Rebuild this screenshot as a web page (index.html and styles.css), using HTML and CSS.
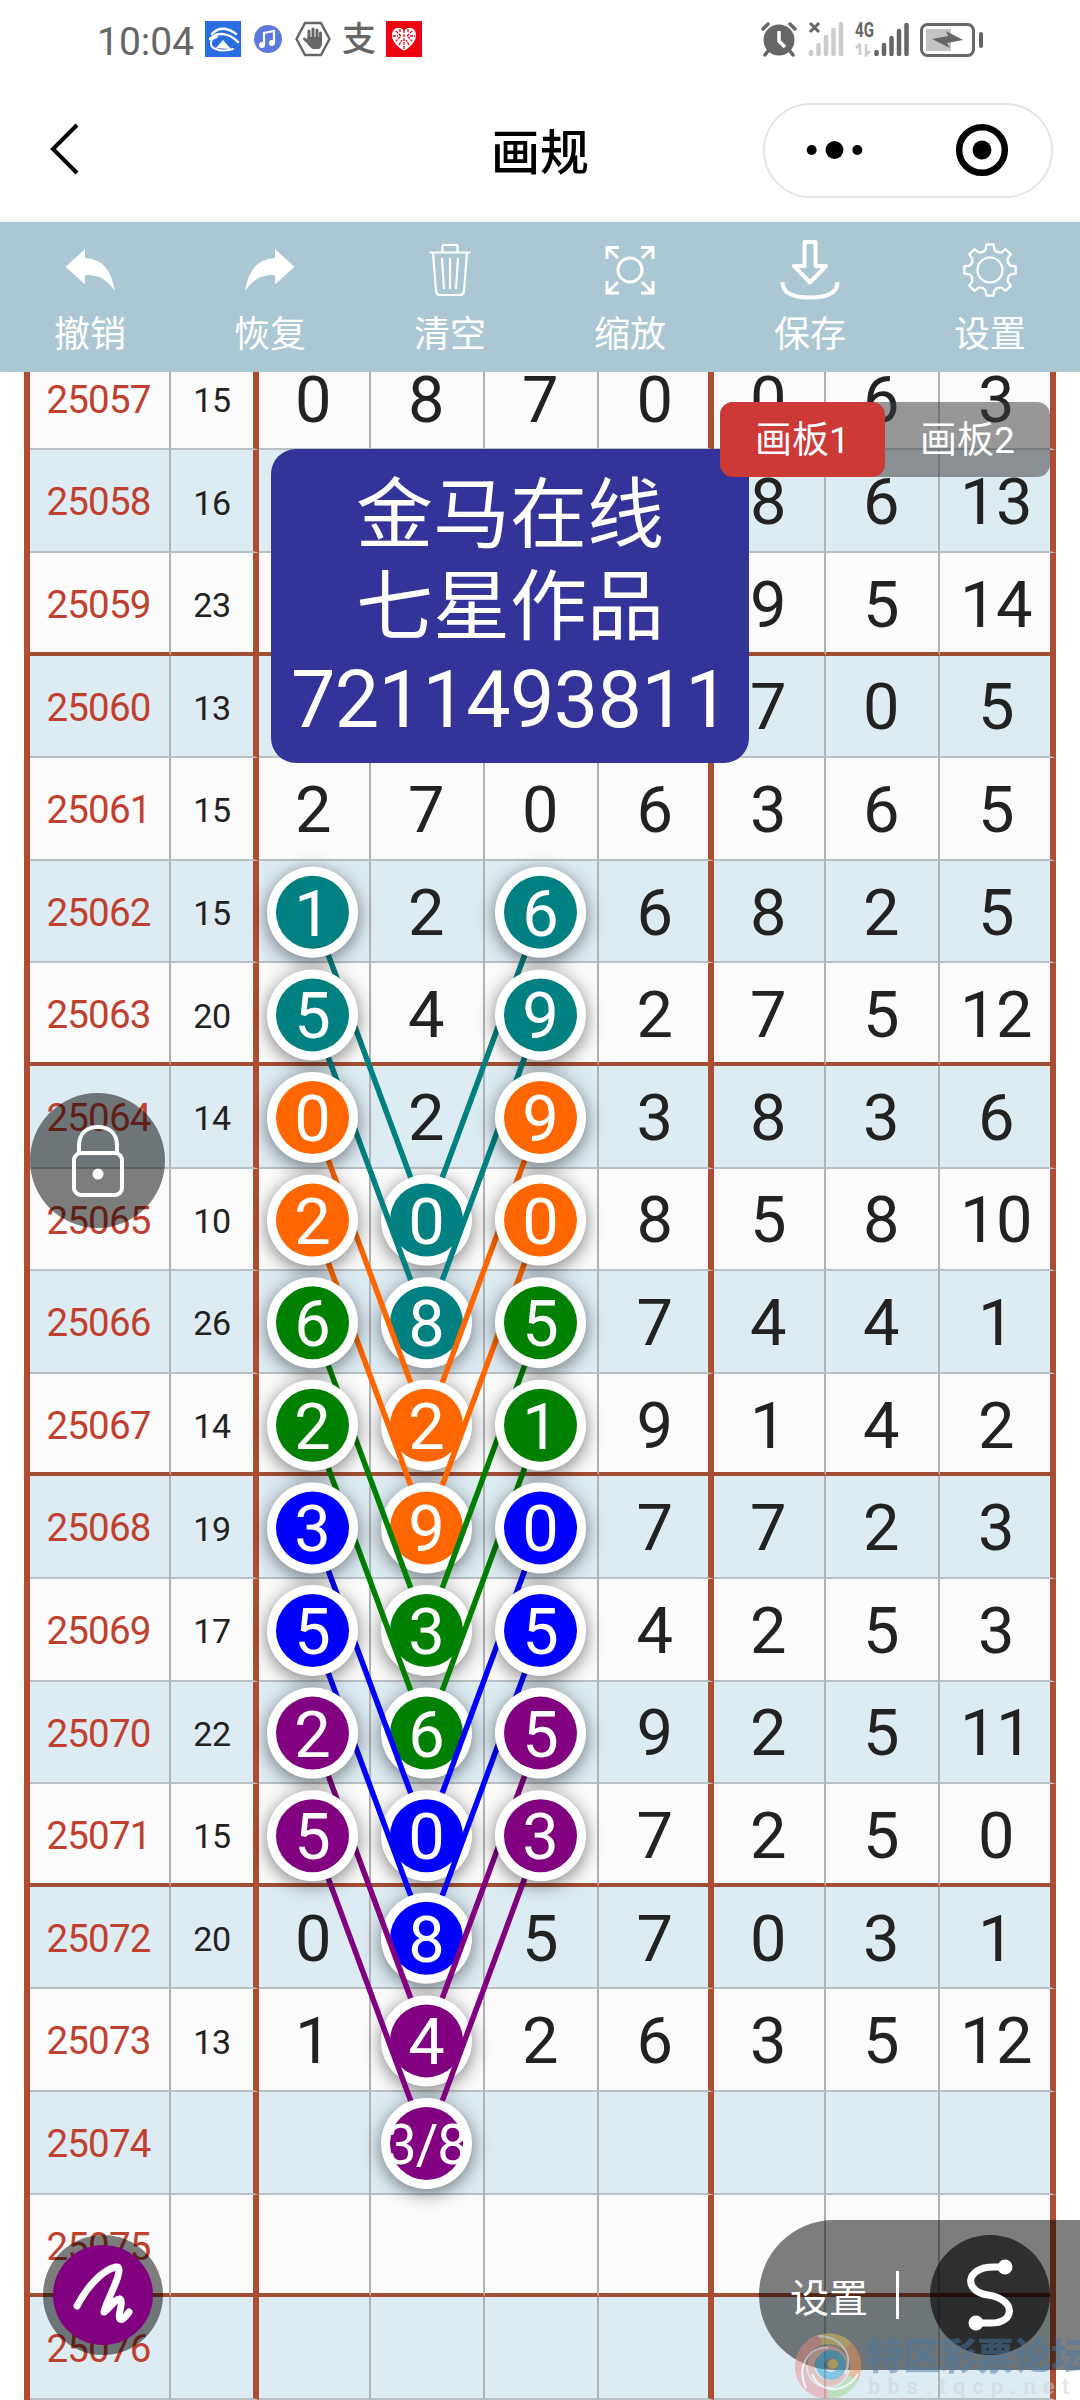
FILE: index.html
```html
<!DOCTYPE html>
<html lang="zh-CN">
<head>
    <meta charset="UTF-8">
    <meta name="viewport" content="width=device-width, initial-scale=1.0">
    <title>画规</title>
    <link rel="stylesheet" href="styles.css">
</head>
<body>
    <header class="status-bar">
        <span class="time">10:04</span>
        <div class="status-icons">
            <svg width="36" height="36" viewBox="0 0 36 36">
                <rect width="36" height="36" fill="#2a6de0"/>
                <g fill="none" stroke="#fff" stroke-linecap="round">
                    <path d="M7 13C13 6 22 6 31 13" stroke-width="2.500"/>
                    <path d="M5 18C13 10 24 12 33 21" stroke-width="2.500"/>
                    <path d="M12 16C4 18 4 26 11 28C17 31 23 29 28 28" stroke-width="2"/>
                </g>
                <path d="M18 19L26 28L11 27Z" fill="#fff"/>
            </svg>
            <svg width="28" height="36" viewBox="0 0 28 36">
                <circle cx="14" cy="18" r="14" fill="#5b78dc"/>
                <path d="M10 24V12L20 10V22" fill="none" stroke="#fff" stroke-width="2.2"/>
                <circle cx="8" cy="24" r="3" fill="#fff"/>
                <circle cx="18" cy="22" r="3" fill="#fff"/>
            </svg>
            <svg width="36" height="36" viewBox="0 0 36 36">
                <path d="M10 2H26L34.500 18L26 34H10L1.500 18Z" fill="none" stroke="#666" stroke-width="2.5" stroke-linejoin="round"/>
                <g fill="none" stroke="#666" stroke-width="3" stroke-linecap="round">
                    <path d="M14 18V10M18 18V8M22 18V9M25.500 20V12"/>
                    <path d="M15 23L9.500 18"/>
                </g>
                <path d="M12.500 16H27V23Q26 28 23 28H18Q15 27 12 22Z" fill="#666"/>
            </svg>
            <span class="pay">支</span>
            <svg width="36" height="36" viewBox="0 0 36 36">
                <rect width="36" height="36" fill="#ec0011"/>
                <path d="M18 30C12 26 6 21 6 14C6 7 14 4 18 10C22 4 30 7 30 14C30 21 24 26 18 30Z" fill="#fff"/>
                <g fill="none" stroke="#ec0011" stroke-width="1.300">
                    <path d="M18 9V30M10 10L15 15L10 20M26 10L21 15L26 20M13 24L16 19M23 24L20 19M7 15H12M24 15H29M14 8V12M22 8V12" stroke-dasharray="3 1"/>
                </g>
            </svg>
        </div>
        <div class="status-right">
            <svg width="36" height="36" viewBox="0 0 36 36">
                <circle cx="18" cy="19" r="15.500" fill="#666"/>
                <path d="M2 8L7 3M34 8L29 3" stroke="#666" stroke-width="3.500" stroke-linecap="round"/>
                <path d="M7 30L4 34M29 30L32 34" stroke="#666" stroke-width="3.500" stroke-linecap="round"/>
                <path d="M18 10V20L24 26" fill="none" stroke="#fff" stroke-width="3.500"/>
            </svg>
            <svg width="36" height="36" viewBox="0 0 36 36">
                <path d="M2 2L11 11M11 2L2 11" stroke="#666" stroke-width="3"/>
                <path d="M3 31V33M10.500 24V33M18 16V33M25.500 9V33M33 3V33" stroke="#ccc" stroke-width="4.500" stroke-linecap="round"/>
            </svg>
            <svg width="54" height="36" viewBox="0 0 54 36">
                <text class="net-label" x="0" y="16" textLength="19" lengthAdjust="spacingAndGlyphs">4G</text>
                <path d="M5 23V34M1 27L5 23M11 23V34L15 30" fill="none" stroke="#ccc" stroke-width="2.500"/>
                <path d="M21.500 31V33M29 24V33M36.500 17V33M44 10V33M51.500 4V33" stroke="#666" stroke-width="4.500" stroke-linecap="round"/>
            </svg>
            <svg width="64" height="36" viewBox="0 0 64 36">
                <rect x="1.500" y="3.500" width="52" height="31" rx="6" fill="none" stroke="#666" stroke-width="3"/>
                <rect x="6" y="8" width="25" height="22" fill="#c4c4c4"/>
                <path d="M12 18L28 15L26 10L43 19L27 22L30 27Z" fill="#666"/>
                <rect x="59" y="11" width="4" height="16" rx="2" fill="#666"/>
            </svg>
        </div>
    </header>

    <nav class="nav-bar">
        <svg class="back" width="30" height="56" viewBox="0 0 30 56">
            <path d="M27 4L3 28L27 52" fill="none" stroke="#000" stroke-width="4"/>
        </svg>
        <h1>画规</h1>
        <div class="capsule">
            <svg width="144" height="90" viewBox="0 0 144 90">
                <circle cx="47" cy="45" r="5"/>
                <circle cx="70" cy="45" r="9"/>
                <circle cx="93" cy="45" r="5"/>
            </svg>
            <span class="capsule-line"></span>
            <svg width="144" height="90" viewBox="0 0 144 90">
                <circle cx="74.500" cy="45" r="23" fill="none" stroke="#000" stroke-width="6.500"/>
                <circle cx="74.500" cy="45" r="9.500"/>
            </svg>
        </div>
    </nav>

    <div class="toolbar">
        <div class="tool">
            <svg width="60" height="60" viewBox="0 0 60 60"><path d="M5.400 26.700L25 9.300V18.300C43 18.300 52 32 54.700 51C47 39 38 34.500 25 35V44.300Z" fill="#fff"/></svg>
            <span>撤销</span>
        </div>
        <div class="tool">
            <svg width="60" height="60" viewBox="0 0 60 60"><path d="M54.600 26.700L35 9.300V18.300C17 18.300 8 32 5.300 51C13 39 22 34.500 35 35V44.300Z" fill="#fff"/></svg>
            <span>恢复</span>
        </div>
        <div class="tool">
            <svg width="60" height="60" viewBox="0 0 60 60" fill="none" stroke="#fff" stroke-width="2.200">
                <path d="M9.500 12.500H50.500M22.500 12V6Q22.500 5 23.500 5H36.500Q37.500 5 37.500 6V12"/>
                <path d="M13 12.500L16 51Q16.500 55 20 55H40Q43.500 55 44 51L47 12.500M22 18L24 49M30 18V49M38 18L36 49"/>
            </svg>
            <span>清空</span>
        </div>
        <div class="tool">
            <svg width="60" height="60" viewBox="0 0 60 60" fill="none" stroke="#fff" stroke-width="3">
                <circle cx="30" cy="30" r="12"/>
                <path d="M7 19V7.500H19M7.500 8L18 18M41 7.500H53V19M52.500 8L42 18M7 41V53H19M7.500 52.500L18 42M41 53H53V41M52.500 52.500L42 42"/>
            </svg>
            <span>缩放</span>
        </div>
        <div class="tool">
            <svg width="60" height="60" viewBox="0 0 60 60" fill="none" stroke="#fff" stroke-width="4" stroke-linejoin="round">
                <path d="M24.500 2H35.500V26H46L30 42.500L14 26H24.500Z"/>
                <path d="M2.500 42C2.500 53 12 57.500 30 57.500S57.500 53 57.500 42"/>
            </svg>
            <span>保存</span>
        </div>
        <div class="tool">
            <svg width="60" height="60" viewBox="-30 -30 60 60" fill="none" stroke="#fff" stroke-width="2.200" stroke-linejoin="round">
                <circle r="12.500"/>
                <path d="M-3.600 -25.700H3.600L4.400 -20.500Q7 -17 11.400 -17.600L15.600 -20.800L20.800 -15.600L17.600 -11.400Q17 -7 20.500 -4.400L25.700 -3.600V3.600L20.500 4.400Q17 7 17.600 11.400L20.800 15.600L15.600 20.800L11.400 17.600Q7 17 4.400 20.500L3.600 25.700H-3.600L-4.400 20.500Q-7 17 -11.400 17.600L-15.600 20.800L-20.800 15.600L-17.600 11.400Q-17 7 -20.500 4.400L-25.700 3.600V-3.600L-20.500 -4.400Q-17 -7 -17.600 -11.400L-20.800 -15.600L-15.600 -20.800L-11.400 -17.600Q-7 -17 -4.400 -20.500Z"/>
            </svg>
            <span>设置</span>
        </div>
    </div>

    <main class="board">
        <div class="grid" id="grid"></div>
        <svg class="marks" id="marks" width="1080" height="2028" viewBox="0 372 1080 2028"></svg>

        <div class="banner">
            <p>金马在线</p>
            <p>七星作品</p>
            <p class="number">7211493811</p>
        </div>

        <div class="tabs">
            <span class="tab active">画板1</span>
            <span class="tab">画板2</span>
        </div>

        <div class="lock">
            <svg width="60" height="80" viewBox="0 0 60 80" fill="none" stroke="#fff" stroke-width="4">
                <rect x="6" y="32" width="48" height="42" rx="7"/>
                <path d="M11 31V25C11 12 19 6 30 6S49 12 49 25V31"/>
                <circle cx="30" cy="53" r="5.500" fill="#fff" stroke="none"/>
            </svg>
        </div>

        <div class="pen">
            <svg width="100" height="100" viewBox="0 0 100 100">
                <path d="M24 61C34 42 49 25 63 22C74 21 51 60 51 67C55 66 62 53 67 54C71 57 64 71 67 74Q70 76 76 67" fill="none" stroke="#fff" stroke-width="7" stroke-linecap="round" stroke-linejoin="round"/>
            </svg>
        </div>

        <div class="dock">
            <span class="dock-label">设置</span>
            <span class="dock-line"></span>
            <div class="curve">
                <svg width="120" height="120" viewBox="0 0 120 120">
                    <path d="M75 32H64C34 32 34 57 58 60C86 64 86 88 61 88H46" fill="none" stroke="#fff" stroke-width="7"/>
                    <circle cx="75" cy="32" r="7.500" fill="#fff"/>
                    <circle cx="46" cy="88" r="7.500" fill="#fff"/>
                </svg>
            </div>
        </div>

        <div class="forum">
            <svg width="66" height="66" viewBox="-33 -33 66 66" fill="none">
                <g stroke-width="11">
                    <path d="M-27 6A27.500 27.500 0 0 1 -8 -26" stroke="#e58a80"/>
                    <path d="M-8 -26A27.500 27.500 0 0 1 20 -19" stroke="#e0c050"/>
                    <path d="M20 -19A27.500 27.500 0 0 1 25 12" stroke="#f0934e"/>
                    <path d="M25 12A27.500 27.500 0 0 1 0 27.500" stroke="#9cd48c"/>
                    <path d="M0 27.500A27.500 27.500 0 0 1 -27 6" stroke="#e88f9c"/>
                </g>
                <circle r="17" stroke="#e8a090" stroke-width="7"/>
                <circle cx="3" cy="-1" r="11" stroke="#2f9ed0" stroke-width="8"/>
                <circle cx="5" cy="-2" r="5" fill="#e0b848"/>
                <path d="M-22 22C-32 2 -20 -20 0 -18M-10 -30C12 -30 27 -12 17 8M30 8C20 26 -6 30 -16 8" stroke="#fff" stroke-width="2"/>
            </svg>
            <div class="forum-text">
                <span class="forum-name">特区彩票论坛</span>
                <span class="forum-url">bbs.tqcp.net</span>
            </div>
        </div>
    </main>

    <script src="script.js"></script>
</body>
</html>
```
FILE: styles.css
```css
* {
    box-sizing: border-box;
}
body {
    margin: 0;
    width: 1080px;
    height: 2400px;
    overflow: hidden;
    background-color: #fff;
    font-family: Roboto, "Noto Sans CJK SC", sans-serif;
    color: #222;
}
svg {
    display: block;
    flex-shrink: 0;
}

/* status bar */
.status-bar {
    display: flex;
    align-items: center;
    height: 78px;
    padding: 0 96px 0 97px;
    color: #666;
}
.time {
    width: 108px;
    font-size: 39px;
    line-height: 78px;
    padding-top: 5px;
}
.status-icons {
    display: flex;
    align-items: center;
}
.status-icons svg:nth-child(2) {
    margin-left: 13px;
}
.status-icons svg:nth-child(3) {
    margin-left: 13px;
}
.pay {
    width: 36px;
    margin: 0 8px 0 11px;
    font-size: 34px;
    line-height: 36px;
    font-weight: 500;
}
.status-right {
    display: flex;
    gap: 11px;
    margin-left: auto;
}
.net-label {
    font-size: 20px;
    font-weight: bold;
    fill: #666;
}

/* title bar */
.nav-bar {
    display: grid;
    grid-template-columns: 1fr auto 1fr;
    align-items: center;
    height: 144px;
    padding: 0 27px 0 50px;
    border-bottom: 2px solid #eef5f7;
}
.nav-bar h1 {
    margin: 9px 0 0 -23px;
    font-size: 49px;
    line-height: 60px;
    font-weight: 500;
    color: #000;
}
.capsule {
    display: flex;
    align-items: center;
    justify-self: end;
    width: 290px;
    height: 95px;
    margin-top: 2px;
    border: 2px solid #e6e6e6;
    border-radius: 48px;
}
.capsule svg {
    width: 143px;
}
.capsule-line {
    width: 2px;
    height: 56px;
    background-color: #ddd;
}

/* toolbar */
.toolbar {
    display: flex;
    height: 150px;
    background-color: #abc7d3;
}
.tool {
    display: flex;
    flex-direction: column;
    align-items: center;
    width: 180px;
    padding-top: 18px;
    color: #fff;
    font-size: 36px;
}
.tool span {
    margin-top: 12px;
    line-height: 46px;
}

/* number table */
.board {
    position: relative;
    height: 2028px;
    overflow: hidden;
}
.grid {
    width: 1032px;
    margin: -24.2px 0 0 24px;
    border-left: 6px solid #ae4d31;
}
.row {
    display: grid;
    grid-template-columns: 141px 88px 112px 114px 114px 115px 112px 114px 116px;
    height: 102.6px;
    background-color: #fbfbfb;
}
.row.even {
    background-color: #ddebf3;
}
.cell {
    display: flex;
    align-items: center;
    justify-content: center;
    border-right: 2px solid #b0b2b4;
    border-bottom: 2px solid #b9c0c4;
    padding: 4px 2px 0 0;
    font-size: 65px;
    line-height: 1;
    letter-spacing: -0.5px;
}
.row.thick .cell {
    padding-top: 6px;
    border-bottom: 4px solid #a24e34;
}
.cell.issue {
    font-size: 38.5px;
    letter-spacing: -0.8px;
    color: #c0402f;
}
.cell.sum {
    padding-right: 0;
    font-size: 34px;
    letter-spacing: -0.3px;
}
.row .cell:nth-child(2),
.row .cell:nth-child(6),
.row .cell:nth-child(9) {
    border-right: 6px solid #ae4d31;
}
.cell:nth-child(6),
.cell:nth-child(9) {
    padding-right: 0;
    padding-left: 2px;
}

/* circles and lines drawn over the table */
.marks {
    position: absolute;
    left: 0;
    top: 0;
}
.marks text {
    font-size: 65px;
    fill: #fff;
    text-anchor: middle;
}
.marks .pair {
    font-size: 55px;
    letter-spacing: -1px;
}
.ring {
    fill: #fff;
    filter: drop-shadow(0 4px 9px rgba(0, 0, 0, 0.5));
}

.banner {
    position: absolute;
    left: 271px;
    top: 77px;
    width: 478px;
    height: 314px;
    padding-top: 14px;
    border-radius: 25px;
    background-color: #333399;
    color: #fff;
    text-align: center;
    font-size: 77px;
}
.banner p {
    margin: 0;
    height: 92px;
    line-height: 92px;
    font-family: "Noto Sans CJK SC", sans-serif;
}
.banner .number {
    padding-top: 7px;
    font-family: Roboto, sans-serif;
    font-size: 79px;
    letter-spacing: -0.6px;
}

.tabs {
    position: absolute;
    left: 720px;
    top: 30px;
    display: flex;
    width: 330px;
    height: 75px;
    border-radius: 13px;
    background-color: rgba(60, 60, 60, 0.52);
}
.tab {
    width: 165px;
    padding-top: 2px;
    line-height: 73px;
    border-radius: 13px;
    text-align: center;
    font-size: 37px;
    color: #fff;
}
.tab.active {
    background-color: #cd3936;
}

.lock {
    position: absolute;
    left: 30px;
    top: 721px;
    display: flex;
    align-items: center;
    justify-content: center;
    width: 135px;
    height: 135px;
    border-radius: 50%;
    background-color: rgba(0, 0, 0, 0.5);
}

.pen {
    position: absolute;
    left: 43px;
    top: 1863px;
    width: 120px;
    height: 120px;
    padding: 10px;
    border-radius: 50%;
    background-color: rgba(0, 0, 0, 0.5);
}
.pen svg {
    border-radius: 50%;
    background-color: #800080;
}

.dock {
    position: absolute;
    left: 759px;
    top: 1848px;
    display: flex;
    align-items: center;
    width: 321px;
    height: 150px;
    padding-left: 31px;
    border-radius: 75px 0 0 75px;
    background-color: rgba(0, 0, 0, 0.5);
    color: #fff;
}
.dock-label {
    width: 106px;
    font-size: 39px;
}
.dock-line {
    width: 3px;
    height: 48px;
    margin-right: 31px;
    background-color: #fff;
}
.curve {
    border-radius: 50%;
    background-color: rgba(0, 0, 0, 0.62);
}

.forum {
    position: absolute;
    left: 795px;
    top: 1961px;
    display: flex;
    gap: 5px;
    opacity: 0.5;
}
.forum-text {
    display: flex;
    flex-direction: column;
    white-space: nowrap;
}
.forum-name {
    margin-top: 5px;
    font-size: 37px;
    line-height: 40px;
    font-weight: 900;
    color: #4b78a4;
}
.forum-url {
    padding-left: 2px;
    font-size: 22px;
    line-height: 18px;
    font-weight: bold;
    letter-spacing: 7px;
    color: #c9d3dc;
}
```
FILE: script.js
```js
const rows = [
    [25057, 15, 0, 8, 7, 0, 0, 6, 3],
    [25058, 16, '', '', '', '', 8, 6, 13],
    [25059, 23, '', '', '', '', 9, 5, 14],
    [25060, 13, '', '', '', '', 7, 0, 5],
    [25061, 15, 2, 7, 0, 6, 3, 6, 5],
    [25062, 15, 1, 2, 6, 6, 8, 2, 5],
    [25063, 20, 5, 4, 9, 2, 7, 5, 12],
    [25064, 14, 0, 2, 9, 3, 8, 3, 6],
    [25065, 10, 2, 0, 0, 8, 5, 8, 10],
    [25066, 26, 6, 8, 5, 7, 4, 4, 1],
    [25067, 14, 2, 2, 1, 9, 1, 4, 2],
    [25068, 19, 3, 9, 0, 7, 7, 2, 3],
    [25069, 17, 5, 3, 5, 4, 2, 5, 3],
    [25070, 22, 2, 6, 5, 9, 2, 5, 11],
    [25071, 15, 5, 0, 3, 7, 2, 5, 0],
    [25072, 20, 0, 8, 5, 7, 0, 3, 1],
    [25073, 13, 1, 4, 2, 6, 3, 5, 12],
    [25074, '', '', '', '', '', '', '', ''],
    [25075, '', '', '', '', '', '', '', ''],
    [25076, '', '', '', '', '', '', '', '']
];

// first row of each colour group
const groups = [
    [25062, '#008080'],
    [25064, '#ff6600'],
    [25066, '#008000'],
    [25068, '#0000ff'],
    [25070, '#800080']
];

const columns = [312.5, 426.5, 540.5];
const radius = 45.5;

// numbers covered by a ball are drawn on the ball only
function isMarked(issue, col) {
    if (col === 0 || col === 2) {
        return issue >= 25062 && issue <= 25071;
    }
    return col === 1 && issue >= 25065 && issue <= 25074;
}

document.getElementById('grid').innerHTML = rows.map(row => {
    const even = row[0] % 2 === 0 ? ' even' : '';
    const thick = row[0] % 4 === 3 ? ' thick' : '';
    const cells = row.map((value, i) => {
        const type = i === 0 ? ' issue' : i === 1 ? ' sum' : '';
        return `<div class="cell${type}">${isMarked(row[0], i - 2) ? '' : value}</div>`;
    });
    return `<div class="row${even}${thick}">${cells.join('')}</div>`;
}).join('');

function rowY(issue) {
    return 912.3 + (issue - 25062) * 102.6;
}

function ball(issue, col, color) {
    const x = columns[col];
    const y = rowY(issue);
    const last = issue === 25074;
    const value = last ? '3/8' : rows[issue - 25057][col + 2];
    return `<circle class="ring" cx="${x}" cy="${y}" r="${radius}"/>
        <circle cx="${x}" cy="${y}" r="36.500" fill="${color}"/>
        <text x="${x}" y="${y + (last ? 20 : 23.5)}"${last ? ' class="pair"' : ''}>${value}</text>`;
}

function line(issue, col, color) {
    const x1 = columns[col], y1 = rowY(issue);
    const x2 = columns[1], y2 = rowY(issue + 3);
    const length = Math.hypot(x2 - x1, y2 - y1);
    const dx = (x2 - x1) / length * radius;
    const dy = (y2 - y1) / length * radius;
    return `<line x1="${x1 + dx}" y1="${y1 + dy}" x2="${x2 - dx}" y2="${y2 - dy}" stroke="${color}" stroke-width="5.500"/>`;
}

let middle = '', lines = '', sides = '';
groups.forEach(([first, color]) => {
    [first, first + 1].forEach(issue => {
        middle += ball(issue + 3, 1, color);
        lines += line(issue, 0, color) + line(issue, 2, color);
        sides += ball(issue, 0, color) + ball(issue, 2, color);
    });
});
document.getElementById('marks').innerHTML = middle + lines + sides;
```
